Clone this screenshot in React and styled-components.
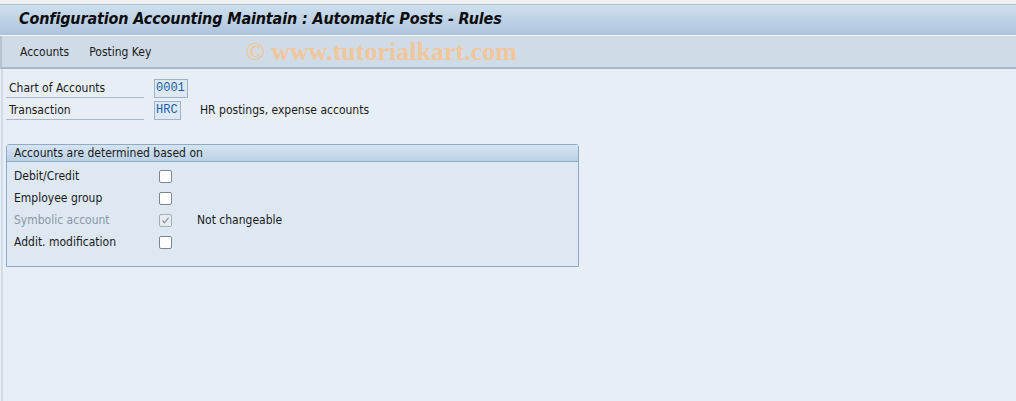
import React from "react";
import styled, { createGlobalStyle } from "styled-components";

const GlobalStyle = createGlobalStyle`
  html, body {
    margin: 0;
    padding: 0;
    background: #e8eef6;
  }
  body {
    font-family: "DejaVu Sans Condensed", "Liberation Sans", sans-serif;
    font-size: 12px;
    color: #1a1a1a;
  }
`;

const Screen = styled.div`
  width: 1016px;
  height: 401px;
  overflow: hidden;
  background: #e8eef6;
`;

const TopStrip = styled.div`
  height: 4px;
  background: #eef0f3;
  border-bottom: 1px solid #b6c2cf;
`;

const TitleBar = styled.div`
  height: 31px;
  box-sizing: border-box;
  display: flex;
  align-items: center;
  padding: 0 0 3px 19px;
  background: linear-gradient(#cfe0ee, #acc4dd);
  border-bottom: 1px solid #f4f8fc;
`;

const Title = styled.h1`
  margin: 0;
  font-family: "DejaVu Sans Condensed", "Liberation Sans", sans-serif;
  font-size: 16px;
  font-weight: bold;
  font-style: italic;
  letter-spacing: -0.14px;
  color: #0c0c0c;
  white-space: nowrap;
`;

const Toolbar = styled.div`
  height: 33px;
  box-sizing: border-box;
  display: flex;
  align-items: center;
  padding-left: 18px;
  background: #cfdce7;
  border-bottom: 2px solid #a8b8ca;
  border-left: 2px solid #b7c3cf;
`;

const MenuItem = styled.span`
  margin-right: 20px;
  font-size: 12px;
  color: #1a1a1a;
`;

const Watermark = styled.span`
  margin-left: 74px;
  font-family: "Liberation Serif", serif;
  font-size: 26px;
  font-weight: bold;
  color: #f1c69a;
`;

const Body = styled.div`
  height: 333px;
  border-left: 2px solid #d3dbe4;
  margin-left: 1px;
  padding: 8px 0 0 3px;
  box-sizing: border-box;
`;

const FieldRow = styled.div`
  display: flex;
  align-items: center;
  height: 22px;
`;

const Label = styled.div`
  width: 138px;
  height: 20px;
  line-height: 21px;
  padding-left: 3px;
  box-sizing: border-box;
  border-bottom: 1px solid #aab7c6;
  margin-right: 10px;
  color: #1a1a1a;
`;

const Input = styled.div`
  width: ${(p) => p.width}px;
  height: 19px;
  box-sizing: border-box;
  border: 1px solid #9fb3c8;
  background: #dde8f3;
  font-family: "Liberation Mono", monospace;
  font-size: 12px;
  color: #1c5ea8;
  line-height: 17px;
  padding-left: 1px;
`;

const Description = styled.span`
  margin-left: 19px;
`;

const GroupBox = styled.section`
  margin-top: 23px;
  width: 573px;
  height: 123px;
  box-sizing: border-box;
  border: 1px solid #8eaacb;
  border-radius: 3px 3px 0 0;
  background: #dde8f3;
`;

const GroupHeader = styled.div`
  height: 17px;
  line-height: 16px;
  padding-left: 7px;
  box-sizing: border-box;
  background: linear-gradient(#d6e4f1, #bcd1e6);
  border-bottom: 1px solid #8eaacb;
`;

const GroupRows = styled.div`
  padding-top: 3px;
`;

const CheckRow = styled.div`
  display: flex;
  align-items: center;
  height: 22px;
  padding-left: 7px;
`;

const CheckLabel = styled.span`
  width: 145px;
  color: ${(p) => (p.disabled ? "#8b96a3" : "#1a1a1a")};
`;

const Box = styled.span`
  width: 13px;
  height: 13px;
  box-sizing: border-box;
  border: 1px solid ${(p) => (p.disabled ? "#a5adb6" : "#7d858e")};
  border-radius: 2px;
  background: ${(p) => (p.disabled ? "#e6ecf2" : "#ffffff")};
  display: flex;
  align-items: center;
  justify-content: center;
`;

const Note = styled.span`
  margin-left: 25px;
`;

const Checkbox = ({ checked, disabled }) => (
  <Box disabled={disabled}>
    {checked && (
      <svg width="9" height="9" viewBox="0 0 9 9">
        <path d="M1.5 4.5 L3.5 6.8 L7.6 1.6" fill="none" stroke="#8e98a3" strokeWidth="1.3" />
      </svg>
    )}
  </Box>
);

const rows = [
  { label: "Debit/Credit" },
  { label: "Employee group" },
  { label: "Symbolic account", checked: true, disabled: true, note: "Not changeable" },
  { label: "Addit. modification" },
];

export default function App() {
  return (
    <Screen>
      <GlobalStyle />
      <TopStrip />
      <TitleBar>
        <Title>Configuration Accounting Maintain : Automatic Posts - Rules</Title>
      </TitleBar>
      <Toolbar>
        <MenuItem>Accounts</MenuItem>
        <MenuItem>Posting Key</MenuItem>
        <Watermark>© www.tutorialkart.com</Watermark>
      </Toolbar>
      <Body>
        <FieldRow>
          <Label>Chart of Accounts</Label>
          <Input width={34}>0001</Input>
        </FieldRow>
        <FieldRow>
          <Label>Transaction</Label>
          <Input width={27}>HRC</Input>
          <Description>HR postings, expense accounts</Description>
        </FieldRow>
        <GroupBox>
          <GroupHeader>Accounts are determined based on</GroupHeader>
          <GroupRows>
            {rows.map((r) => (
              <CheckRow key={r.label}>
                <CheckLabel disabled={r.disabled}>{r.label}</CheckLabel>
                <Checkbox checked={r.checked} disabled={r.disabled} />
                {r.note && <Note>{r.note}</Note>}
              </CheckRow>
            ))}
          </GroupRows>
        </GroupBox>
      </Body>
    </Screen>
  );
}
